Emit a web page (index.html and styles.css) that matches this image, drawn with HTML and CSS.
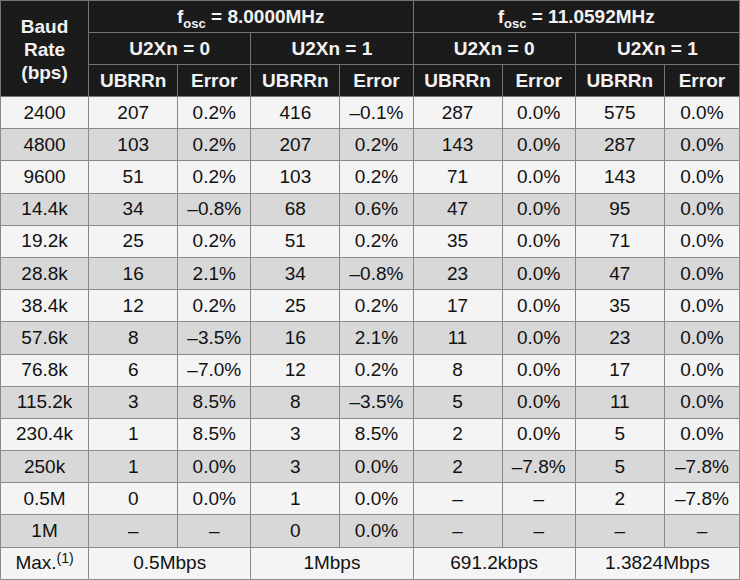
FILE: index.html
```html
<!DOCTYPE html>
<html>
<head>
<meta charset="utf-8">
<link rel="stylesheet" href="styles.css">
</head>
<body>
<table class="baud">
  <colgroup>
    <col class="c-rate">
    <col class="c-ub"><col class="c-er">
    <col class="c-ub"><col class="c-er">
    <col class="c-ub"><col class="c-er">
    <col class="c-ub"><col class="c-er2">
  </colgroup>
  <thead>
    <tr class="h1">
      <th rowspan="3" class="rate-h">Baud<br>Rate<br>(bps)</th>
      <th colspan="4">f<sub>osc</sub> = 8.0000MHz</th>
      <th colspan="4">f<sub>osc</sub> = 11.0592MHz</th>
    </tr>
    <tr class="h2">
      <th colspan="2">U2Xn = 0</th>
      <th colspan="2">U2Xn = 1</th>
      <th colspan="2">U2Xn = 0</th>
      <th colspan="2">U2Xn = 1</th>
    </tr>
    <tr class="h3">
      <th>UBRRn</th><th>Error</th>
      <th>UBRRn</th><th>Error</th>
      <th>UBRRn</th><th>Error</th>
      <th>UBRRn</th><th>Error</th>
    </tr>
  </thead>
  <tbody>
    <tr><td>2400</td><td>207</td><td>0.2%</td><td>416</td><td>–0.1%</td><td>287</td><td>0.0%</td><td>575</td><td>0.0%</td></tr>
    <tr><td>4800</td><td>103</td><td>0.2%</td><td>207</td><td>0.2%</td><td>143</td><td>0.0%</td><td>287</td><td>0.0%</td></tr>
    <tr><td>9600</td><td>51</td><td>0.2%</td><td>103</td><td>0.2%</td><td>71</td><td>0.0%</td><td>143</td><td>0.0%</td></tr>
    <tr><td>14.4k</td><td>34</td><td>–0.8%</td><td>68</td><td>0.6%</td><td>47</td><td>0.0%</td><td>95</td><td>0.0%</td></tr>
    <tr><td>19.2k</td><td>25</td><td>0.2%</td><td>51</td><td>0.2%</td><td>35</td><td>0.0%</td><td>71</td><td>0.0%</td></tr>
    <tr><td>28.8k</td><td>16</td><td>2.1%</td><td>34</td><td>–0.8%</td><td>23</td><td>0.0%</td><td>47</td><td>0.0%</td></tr>
    <tr><td>38.4k</td><td>12</td><td>0.2%</td><td>25</td><td>0.2%</td><td>17</td><td>0.0%</td><td>35</td><td>0.0%</td></tr>
    <tr><td>57.6k</td><td>8</td><td>–3.5%</td><td>16</td><td>2.1%</td><td>11</td><td>0.0%</td><td>23</td><td>0.0%</td></tr>
    <tr><td>76.8k</td><td>6</td><td>–7.0%</td><td>12</td><td>0.2%</td><td>8</td><td>0.0%</td><td>17</td><td>0.0%</td></tr>
    <tr><td>115.2k</td><td>3</td><td>8.5%</td><td>8</td><td>–3.5%</td><td>5</td><td>0.0%</td><td>11</td><td>0.0%</td></tr>
    <tr><td>230.4k</td><td>1</td><td>8.5%</td><td>3</td><td>8.5%</td><td>2</td><td>0.0%</td><td>5</td><td>0.0%</td></tr>
    <tr><td>250k</td><td>1</td><td>0.0%</td><td>3</td><td>0.0%</td><td>2</td><td>–7.8%</td><td>5</td><td>–7.8%</td></tr>
    <tr><td>0.5M</td><td>0</td><td>0.0%</td><td>1</td><td>0.0%</td><td>–</td><td>–</td><td>2</td><td>–7.8%</td></tr>
    <tr><td>1M</td><td>–</td><td>–</td><td>0</td><td>0.0%</td><td>–</td><td>–</td><td>–</td><td>–</td></tr>
    <tr class="max"><td>Max.<sup>(1)</sup></td><td colspan="2">0.5Mbps</td><td colspan="2">1Mbps</td><td colspan="2">691.2kbps</td><td colspan="2">1.3824Mbps</td></tr>
  </tbody>
</table>
</body>
</html>
```
FILE: styles.css
```css
html, body {
  margin: 0;
  padding: 0;
  background: #f4f4f4;
}

.baud {
  width: 740px;
  height: 580px;
  border-collapse: collapse;
  table-layout: fixed;
  font-family: "Liberation Sans", Arial, sans-serif;
  font-size: 19px;
  color: #111;
}

.c-rate { width: 88px; }
.c-ub { width: 89px; }
.c-er { width: 73px; }
.c-er2 { width: 75px; }

.baud th,
.baud td {
  border: 1px solid #8a8a8a;
  text-align: center;
  vertical-align: middle;
  padding: 0;
  height: 31px;
  line-height: 22px;
}

.baud thead th {
  background: #1b1b1b;
  color: #f2f2f2;
  font-weight: bold;
  border-color: #747474;
}

.baud .rate-h {
  line-height: 23px;
  padding-top: 2px;
}

.baud sub {
  font-size: 13px;
  vertical-align: -5px;
  line-height: 0;
}

.baud sup {
  font-size: 14px;
  vertical-align: 6px;
  line-height: 0;
}

.baud tbody tr:nth-child(odd) td {
  background: #f4f4f4;
}

.baud tbody tr:nth-child(even) td {
  background: #d8d8d8;
}
```
